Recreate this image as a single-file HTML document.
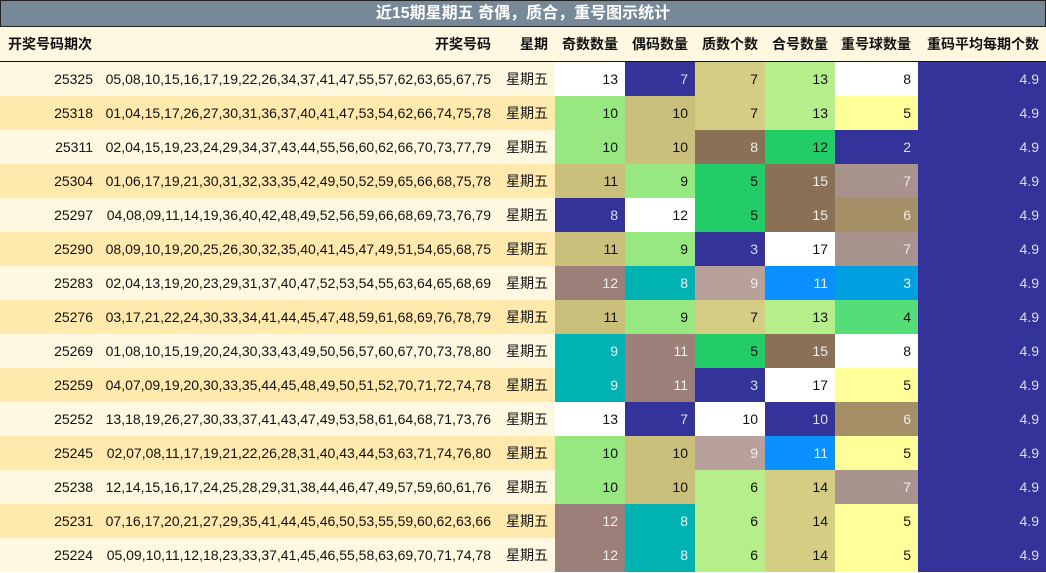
<!DOCTYPE html><html><head><meta charset="utf-8"><style>
body{margin:0;width:1046px;height:573px;overflow:hidden;background:#fff;font-family:"Liberation Sans","Noto Sans CJK SC",sans-serif;font-size:14px;color:#111}
.t{position:absolute;left:0;top:0;width:1044px;height:25px;background:#778899;border:1px solid #222;color:#fff;font-weight:bold;font-size:16px;text-align:center;line-height:25px}
table{position:absolute;left:0;top:27px;border-collapse:collapse;table-layout:fixed;width:1046px}
td,th{padding:0 7px 0 0;text-align:right;white-space:nowrap;overflow:hidden}
th{height:34px;background:#fff8e0;font-weight:bold;border-bottom:1px solid #111}
td{height:34px}
tr.a td{background:#fff8e0}tr.b td{background:#ffe9ad}
.l{text-align:left;padding-left:8px}
.w{background:#fff!important}.db{background:#333399!important;color:#dde}
.lg{background:#98e882!important}.tn{background:#cbbf7c!important}
.tp{background:#9b7f78!important;color:#eee}.tl{background:#00b2b2!important;color:#eee}
.kh{background:#d6cd84!important}.br{background:#8b7058!important;color:#eee}
.gr{background:#22cc66!important}.pk{background:#b8a09b!important;color:#eee}
.yg{background:#b5ee8a!important}.bl{background:#0a90ff!important;color:#eee}
.ye{background:#ffff99!important}.rt{background:#a8938c!important;color:#eee}
.ol{background:#a58f66!important;color:#eee}.cy{background:#00a0e0!important;color:#eee}
.mg{background:#55dd77!important}
</style></head><body>
<div class="t">近15期星期五 奇偶，质合，重号图示统计</div>
<table>
<colgroup><col style="width:100px"><col style="width:398px"><col style="width:57px"><col style="width:70px"><col style="width:70px"><col style="width:70px"><col style="width:70px"><col style="width:83px"><col style="width:128px"></colgroup>
<tr><th class="l">开奖号码期次</th><th>开奖号码</th><th>星期</th><th>奇数数量</th><th>偶码数量</th><th>质数个数</th><th>合号数量</th><th>重号球数量</th><th>重码平均每期个数</th></tr>
<tr class="a"><td>25325</td><td>05,08,10,15,16,17,19,22,26,34,37,41,47,55,57,62,63,65,67,75</td><td>星期五</td><td class="w">13</td><td class="db">7</td><td class="kh">7</td><td class="yg">13</td><td class="w">8</td><td class="db">4.9</td></tr>
<tr class="b"><td>25318</td><td>01,04,15,17,26,27,30,31,36,37,40,41,47,53,54,62,66,74,75,78</td><td>星期五</td><td class="lg">10</td><td class="tn">10</td><td class="kh">7</td><td class="yg">13</td><td class="ye">5</td><td class="db">4.9</td></tr>
<tr class="a"><td>25311</td><td>02,04,15,19,23,24,29,34,37,43,44,55,56,60,62,66,70,73,77,79</td><td>星期五</td><td class="lg">10</td><td class="tn">10</td><td class="br">8</td><td class="gr">12</td><td class="db">2</td><td class="db">4.9</td></tr>
<tr class="b"><td>25304</td><td>01,06,17,19,21,30,31,32,33,35,42,49,50,52,59,65,66,68,75,78</td><td>星期五</td><td class="tn">11</td><td class="lg">9</td><td class="gr">5</td><td class="br">15</td><td class="rt">7</td><td class="db">4.9</td></tr>
<tr class="a"><td>25297</td><td>04,08,09,11,14,19,36,40,42,48,49,52,56,59,66,68,69,73,76,79</td><td>星期五</td><td class="db">8</td><td class="w">12</td><td class="gr">5</td><td class="br">15</td><td class="ol">6</td><td class="db">4.9</td></tr>
<tr class="b"><td>25290</td><td>08,09,10,19,20,25,26,30,32,35,40,41,45,47,49,51,54,65,68,75</td><td>星期五</td><td class="tn">11</td><td class="lg">9</td><td class="db">3</td><td class="w">17</td><td class="rt">7</td><td class="db">4.9</td></tr>
<tr class="a"><td>25283</td><td>02,04,13,19,20,23,29,31,37,40,47,52,53,54,55,63,64,65,68,69</td><td>星期五</td><td class="tp">12</td><td class="tl">8</td><td class="pk">9</td><td class="bl">11</td><td class="cy">3</td><td class="db">4.9</td></tr>
<tr class="b"><td>25276</td><td>03,17,21,22,24,30,33,34,41,44,45,47,48,59,61,68,69,76,78,79</td><td>星期五</td><td class="tn">11</td><td class="lg">9</td><td class="kh">7</td><td class="yg">13</td><td class="mg">4</td><td class="db">4.9</td></tr>
<tr class="a"><td>25269</td><td>01,08,10,15,19,20,24,30,33,43,49,50,56,57,60,67,70,73,78,80</td><td>星期五</td><td class="tl">9</td><td class="tp">11</td><td class="gr">5</td><td class="br">15</td><td class="w">8</td><td class="db">4.9</td></tr>
<tr class="b"><td>25259</td><td>04,07,09,19,20,30,33,35,44,45,48,49,50,51,52,70,71,72,74,78</td><td>星期五</td><td class="tl">9</td><td class="tp">11</td><td class="db">3</td><td class="w">17</td><td class="ye">5</td><td class="db">4.9</td></tr>
<tr class="a"><td>25252</td><td>13,18,19,26,27,30,33,37,41,43,47,49,53,58,61,64,68,71,73,76</td><td>星期五</td><td class="w">13</td><td class="db">7</td><td class="w">10</td><td class="db">10</td><td class="ol">6</td><td class="db">4.9</td></tr>
<tr class="b"><td>25245</td><td>02,07,08,11,17,19,21,22,26,28,31,40,43,44,53,63,71,74,76,80</td><td>星期五</td><td class="lg">10</td><td class="tn">10</td><td class="pk">9</td><td class="bl">11</td><td class="ye">5</td><td class="db">4.9</td></tr>
<tr class="a"><td>25238</td><td>12,14,15,16,17,24,25,28,29,31,38,44,46,47,49,57,59,60,61,76</td><td>星期五</td><td class="lg">10</td><td class="tn">10</td><td class="yg">6</td><td class="kh">14</td><td class="rt">7</td><td class="db">4.9</td></tr>
<tr class="b"><td>25231</td><td>07,16,17,20,21,27,29,35,41,44,45,46,50,53,55,59,60,62,63,66</td><td>星期五</td><td class="tp">12</td><td class="tl">8</td><td class="yg">6</td><td class="kh">14</td><td class="ye">5</td><td class="db">4.9</td></tr>
<tr class="a"><td>25224</td><td>05,09,10,11,12,18,23,33,37,41,45,46,55,58,63,69,70,71,74,78</td><td>星期五</td><td class="tp">12</td><td class="tl">8</td><td class="yg">6</td><td class="kh">14</td><td class="ye">5</td><td class="db">4.9</td></tr>
</table></body></html>
